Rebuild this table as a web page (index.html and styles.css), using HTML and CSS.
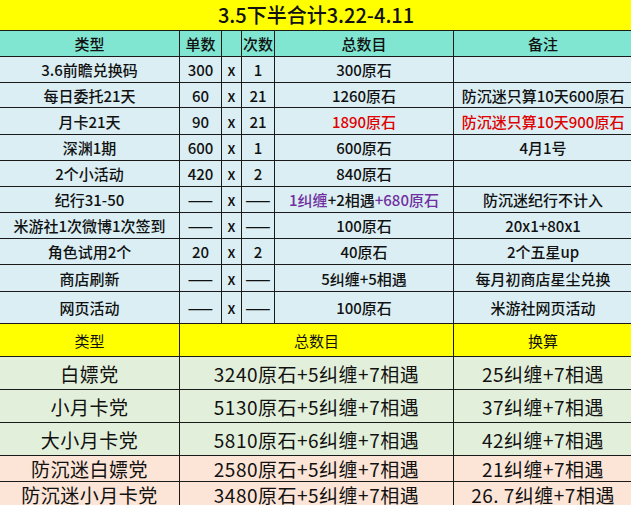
FILE: index.html
```html
<!DOCTYPE html>
<html lang="zh">
<head>
<meta charset="utf-8">
<title>3.5下半合计</title>
<link rel="stylesheet" href="styles.css">
</head>
<body>
<table class="sheet">
  <colgroup>
    <col class="c-type"><col class="c-unit"><col class="c-x"><col class="c-times"><col class="c-total"><col class="c-note">
  </colgroup>
  <tr class="r-title"><td colspan="6" class="title">3.5下半合计3.22-4.11</td></tr>
  <tr class="r-head h26"><td>类型</td><td>单数</td><td></td><td>次数</td><td>总数目</td><td>备注</td></tr>
  <tr class="r-data h26"><td>3.6前瞻兑换码</td><td>300</td><td>x</td><td>1</td><td>300原石</td><td></td></tr>
  <tr class="r-data h25"><td>每日委托21天</td><td>60</td><td>x</td><td>21</td><td>1260原石</td><td>防沉迷只算10天600原石</td></tr>
  <tr class="r-data h27"><td>月卡21天</td><td>90</td><td>x</td><td>21</td><td class="red">1890原石</td><td class="red">防沉迷只算10天900原石</td></tr>
  <tr class="r-data h26"><td>深渊1期</td><td>600</td><td>x</td><td>1</td><td>600原石</td><td>4月1号</td></tr>
  <tr class="r-data h26"><td>2个小活动</td><td>420</td><td>x</td><td>2</td><td>840原石</td><td></td></tr>
  <tr class="r-data h26"><td>纪行31-50</td><td>——</td><td>x</td><td>——</td><td><span class="purple">1纠缠</span>+2相遇<span class="purple">+680原石</span></td><td>防沉迷纪行不计入</td></tr>
  <tr class="r-data h26"><td>米游社1次微博1次签到</td><td>——</td><td>x</td><td>——</td><td>100原石</td><td>20x1+80x1</td></tr>
  <tr class="r-data h26"><td>角色试用2个</td><td>20</td><td>x</td><td>2</td><td>40原石</td><td>2个五星up</td></tr>
  <tr class="r-data h27"><td>商店刷新</td><td>——</td><td>x</td><td>——</td><td>5纠缠+5相遇</td><td>每月初商店星尘兑换</td></tr>
  <tr class="r-data h32"><td>网页活动</td><td>——</td><td>x</td><td>——</td><td>100原石</td><td>米游社网页活动</td></tr>
  <tr class="r-sumhead h33"><td>类型</td><td colspan="4">总数目</td><td>换算</td></tr>
  <tr class="r-green h33 big"><td>白嫖党</td><td colspan="4">3240原石+5纠缠+7相遇</td><td>25纠缠+7相遇</td></tr>
  <tr class="r-green h33 big"><td>小月卡党</td><td colspan="4">5130原石+5纠缠+7相遇</td><td>37纠缠+7相遇</td></tr>
  <tr class="r-green h33 big"><td>大小月卡党</td><td colspan="4">5810原石+6纠缠+7相遇</td><td>42纠缠+7相遇</td></tr>
  <tr class="r-peach h26 big"><td>防沉迷白嫖党</td><td colspan="4">2580原石+5纠缠+7相遇</td><td>21纠缠+7相遇</td></tr>
  <tr class="r-peach h26 big"><td>防沉迷小月卡党</td><td colspan="4">3480原石+5纠缠+7相遇</td><td>26. 7纠缠+7相遇</td></tr>
</table>
</body>
</html>
```
FILE: styles.css
```css
html, body {
  margin: 0;
  padding: 0;
  background: #ffffff;
  overflow: hidden;
}
.sheet {
  border-collapse: collapse;
  table-layout: fixed;
  width: 633px;
  margin-left: -1px;
  margin-top: -1px;
  font-family: "Noto Sans CJK SC", "Noto Sans", sans-serif;
  font-size: 15px;
  font-weight: 500;
  color: #111;
}
.c-type { width: 180px; }
.c-unit { width: 42px; }
.c-x { width: 20px; }
.c-times { width: 33px; }
.c-total { width: 179px; }
.c-note { width: 179px; }
.sheet td {
  border: 1px solid #1a1a1a;
  padding: 0;
  text-align: center;
  vertical-align: middle;
  white-space: nowrap;
  line-height: 1;
}
.r-title td {
  height: 31px;
  background: #ffff00;
  font-size: 20px;
  border-top: none;
}
.h25 td { height: 24px; }
.h26 td { height: 25px; }
.h27 td { height: 26px; }
.h32 td { height: 31px; }
.h33 td { height: 32px; }
.r-head td { background: #80e6d2; }
.r-data td { background: #daeef3; }
.r-sumhead td { background: #ffff00; font-weight: 400; }
.r-green td { background: #e2efda; }
.r-peach td { background: #fce4d6; }
.big td {
  font-size: 19px;
  font-weight: 400;
  letter-spacing: 0.5px;
}
.red { color: #e00000; }
.purple { color: #7030a0; }
```
